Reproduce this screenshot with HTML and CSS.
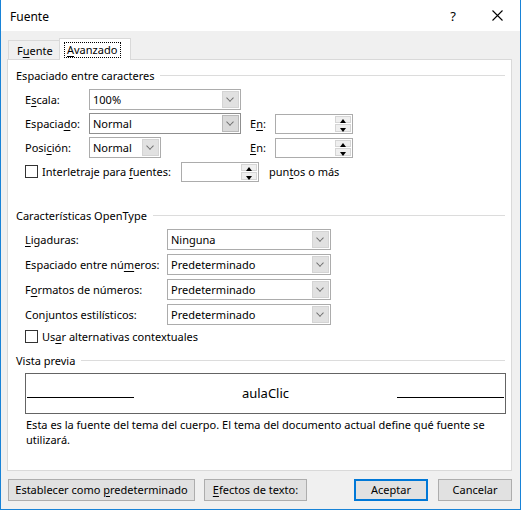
FILE: index.html
```html
<!DOCTYPE html>
<html lang="es">
<head>
<meta charset="utf-8">
<title>Fuente</title>
<link rel="stylesheet" href="styles.css">
</head>
<body>
<div class="dialog">
  <div class="titlebar">
    <span class="title">Fuente</span>
    <span class="help">?</span>
    <svg class="close" width="11" height="11" viewBox="0 0 11 11"><path d="M0.5 0.5 L10.5 10.5 M10.5 0.5 L0.5 10.5" stroke="#000" stroke-width="1.1" fill="none"/></svg>
  </div>
  <div class="content">
    <div class="tabs">
      <div class="tab"><span>F<u>u</u>ente</span></div>
      <div class="tab active"><span class="focus"><u>A</u>vanzado</span></div>
    </div>
    <div class="panel">
      <div class="section-head first"><span>Espaciado entre caracteres</span><i class="rule"></i></div>
      <div class="rows spacing">
        <div class="row">
          <span class="lbl w64">E<u>s</u>cala:</span>
          <div class="cell161"><div class="combo w152"><span class="val">100%</span><span class="drop"></span></div></div>
        </div>
        <div class="row">
          <span class="lbl w64">Espacia<u>d</u>o:</span>
          <div class="cell161"><div class="combo w152 hot"><span class="val">Normal</span><span class="drop"></span></div></div>
          <span class="lbl w25">E<u>n</u>:</span>
          <div class="spin w78"><span class="spin-btns"><b class="up"></b><b class="down"></b></span></div>
        </div>
        <div class="row">
          <span class="lbl w64">Posi<u>c</u>ión:</span>
          <div class="cell161"><div class="combo w72"><span class="val">Normal</span><span class="drop"></span></div></div>
          <span class="lbl w25"><u>E</u>n:</span>
          <div class="spin w78"><span class="spin-btns"><b class="up"></b><b class="down"></b></span></div>
        </div>
        <div class="row">
          <span class="check"></span>
          <span class="lbl w139">Interletraje para <u>f</u>uentes:</span>
          <div class="spin w78"><span class="spin-btns"><b class="up"></b><b class="down"></b></span></div>
          <span class="lbl after">pun<u>t</u>os o más</span>
        </div>
      </div>

      <div class="section-head second"><span>Características OpenType</span><i class="rule"></i></div>
      <div class="rows opentype">
        <div class="row">
          <span class="lbl w142"><u>L</u>igaduras:</span>
          <div class="combo w164"><span class="val">Ninguna</span><span class="drop"></span></div>
        </div>
        <div class="row">
          <span class="lbl w142">Espaciado entre nú<u>m</u>eros:</span>
          <div class="combo w164"><span class="val">Predeterminado</span><span class="drop"></span></div>
        </div>
        <div class="row">
          <span class="lbl w142">F<u>o</u>rmatos de números:</span>
          <div class="combo w164"><span class="val">Predeterminado</span><span class="drop"></span></div>
        </div>
        <div class="row">
          <span class="lbl w142">Con<u>j</u>untos estilísticos:</span>
          <div class="combo w164"><span class="val">Predeterminado</span><span class="drop"></span></div>
        </div>
        <div class="row short">
          <span class="check"></span>
          <span class="lbl">Us<u>a</u>r alternativas contextuales</span>
        </div>
      </div>

      <div class="section-head third"><span>Vista previa</span><i class="rule"></i></div>
      <div class="preview">
        <i class="pline"></i>
        <span class="sample">aulaClic</span>
        <i class="pline"></i>
      </div>
      <p class="desc">Esta es la fuente del tema del cuerpo. El tema del documento actual define qué fuente se utilizará.</p>
    </div>
    <div class="buttons">
      <div class="btn b-default"><span>Establecer como <u>p</u>redeterminado</span></div>
      <div class="btn b-effects"><span><u>E</u>fectos de texto:</span></div>
      <div class="spacer"></div>
      <div class="btn b-ok"><span>Aceptar</span></div>
      <div class="btn b-cancel"><span>Cancelar</span></div>
    </div>
  </div>
</div>
</body>
</html>
```

FILE: styles.css
```css
* { box-sizing: border-box; }
html, body { margin: 0; padding: 0; }
body {
  width: 521px;
  height: 510px;
  font-family: "Noto Sans", "Open Sans", sans-serif;
  font-size: 11px;
  color: #000;
  background: #f0f0f0;
}
u { text-decoration: underline; text-underline-offset: 2px; }

.dialog {
  width: 521px;
  height: 510px;
  border: 1px solid #1883d7;
  border-top: none;
  background: #f0f0f0;
  display: flex;
  flex-direction: column;
}

.titlebar {
  height: 31px;
  background: #fff;
  display: flex;
  align-items: center;
  padding-left: 9px;
}
.title { flex: 1; font-size: 12px; padding-top: 1px; }
.help { font-size: 13px; margin-right: 36px; padding-top: 1px; }
.close { margin-right: 17px; }

.content {
  padding: 0 8px 0 6px;
  display: flex;
  flex-direction: column;
}

.tabs {
  height: 29px;
  padding-top: 7px;
  padding-left: 1px;
  display: flex;
  align-items: flex-end;
  margin-bottom: -1px;
}
.tab {
  height: 20px;
  width: 51px;
  border: 1px solid #d9d9d9;
  border-right: none;
  border-bottom: none;
  background: #f0f0f0;
  padding: 2px 0 0 8px;
  line-height: 16px;
}
.tab.active {
  height: 22px;
  width: 72px;
  background: #fff;
  border-right: 1px solid #d9d9d9;
  position: relative;
  z-index: 1;
  padding: 3px 0 0 4px;
}
.focus {
  display: inline-block;
  border: 1px dotted #000;
  padding: 0 3px 0 2px;
  line-height: 14px;
  height: 16px;
}

.panel {
  height: 412px;
  border: 1px solid #d9d9d9;
  background: #fff;
  padding: 0 5px 0 8px;
}

.section-head {
  display: flex;
  align-items: center;
  height: 15px;
  line-height: 15px;
  white-space: nowrap;
}
.section-head .rule {
  flex: 1;
  height: 1px;
  background: #dcdcdc;
  margin-left: 6px;
  margin-right: 1px;
}
.section-head.first { margin-top: 8px; }
.section-head.second { margin-top: 26px; }
.section-head.third { margin-top: 9px; }

.rows { display: flex; flex-direction: column; padding-left: 9px; }
.rows.spacing { margin-top: 6px; gap: 3px; }
.rows.opentype { margin-top: 6px; gap: 4px; }
.rows .row.short { height: 16px; margin-top: -1px; }

.row {
  display: flex;
  align-items: center;
  height: 21px;
  white-space: nowrap;
}
.lbl { display: inline-block; }
.w64 { width: 64px; }
.w25 { width: 25px; }
.w139 { width: 139px; }
.w142 { width: 142px; }
.after { margin-left: 10px; }
.cell161 { width: 161px; display: flex; }

.combo {
  height: 21px;
  border: 1px solid #acacac;
  background: #fff;
  display: flex;
  align-items: center;
  padding: 1px;
}
.combo.hot { border-color: #8f8f8f; }
.w152 { width: 152px; }
.w72 { width: 72px; }
.w164 { width: 164px; }
.w78 { width: 78px; }
.combo .val { flex: 1; padding-left: 2px; line-height: 16px; }
.combo .drop {
  width: 17px;
  height: 17px;
  background: #e1e1e1;
  border: 1px solid #d4d4d4;
  position: relative;
}
.combo.hot .drop { background: #dadada; border: 1px solid #b9b9b9; }
.combo .drop::after {
  content: "";
  position: absolute;
  left: 4px;
  top: 3px;
  width: 5px;
  height: 5px;
  border-right: 1px solid #6d6d6d;
  border-bottom: 1px solid #6d6d6d;
  transform: rotate(45deg) scale(0.9);
}

.spin {
  height: 20px;
  border: 1px solid #acacac;
  background: #fff;
  display: flex;
  justify-content: flex-end;
  padding: 1px;
}
.spin-btns {
  width: 16px;
  display: flex;
  flex-direction: column;
  gap: 1px;
}
.spin-btns b {
  flex: 1;
  background: #efefef;
  border: 1px solid #d5d5d5;
  position: relative;
}
.spin-btns b::after {
  content: "";
  position: absolute;
  left: 4px;
  width: 0;
  height: 0;
  border-left: 3px solid transparent;
  border-right: 3px solid transparent;
}
.spin-btns b.up::after { top: 2px; border-bottom: 4px solid #000; }
.spin-btns b.down::after { top: 3px; border-top: 4px solid #000; }

.check {
  width: 13px;
  height: 13px;
  border: 1px solid #333;
  background: #fff;
  margin-right: 4px;
}

.preview {
  margin-top: 5px;
  margin-left: 9px;
  height: 41px;
  border: 1px solid #646464;
  display: flex;
  align-items: center;
  padding: 0 1px;
}
.pline {
  width: 107px;
  height: 1px;
  background: #000;
  margin-top: 8px;
}
.sample {
  flex: 1;
  text-align: center;
  font-size: 13px;
  margin-top: -2px;
}
.desc {
  margin: 3px 0 0 10px;
  line-height: 15px;
  width: 470px;
}

.buttons {
  display: flex;
  margin-top: 8px;
  padding-left: 1px;
  height: 22px;
}
.btn {
  height: 22px;
  background: #e1e1e1;
  border: 1px solid #adadad;
  display: flex;
  align-items: center;
  justify-content: center;
  white-space: nowrap;
  padding-bottom: 1px;
}
.b-default { width: 187px; }
.b-effects { width: 103px; margin-left: 9px; }
.spacer { flex: 1; }
.b-ok { width: 74px; border: 2px solid #0078d7; }
.b-cancel { width: 74px; margin-left: 10px; }
```
